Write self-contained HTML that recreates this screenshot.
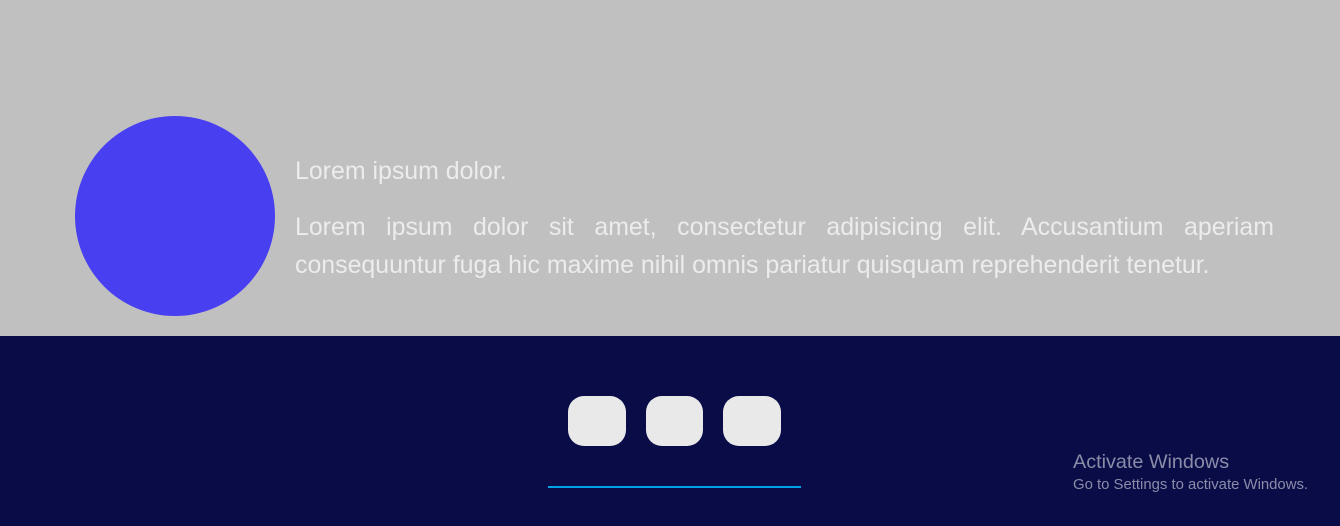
<!DOCTYPE html>
<html><head><style>
body{margin:0;width:1340px;height:526px;overflow:hidden;font-family:"Liberation Sans",Arial,sans-serif;}
.top{position:absolute;left:0;top:0;width:1340px;height:336px;background:#c0c0c0;}
.circle{position:absolute;left:75px;top:116px;width:200px;height:200px;border-radius:50%;background:#4840f0;}
.t1{position:absolute;left:295px;top:157px;font-size:24.9px;color:#ececec;line-height:28px;}
.t2{position:absolute;left:295px;top:208px;width:979px;font-size:24.9px;color:#ececec;line-height:38px;text-align:justify;}
.bot{position:absolute;left:0;top:336px;width:1340px;height:190px;background:#0a0c48;}
.b{position:absolute;top:396px;height:50px;background:#e9e9ea;border-radius:16px;}
.line{position:absolute;left:548px;top:486px;width:253px;height:2px;background:#00a2e8;}
.w1{position:absolute;left:1073px;top:451px;font-size:19.8px;color:#8a8ca8;}
.w2{position:absolute;left:1073px;top:477px;font-size:14.9px;color:#8a8ca8;}
</style></head><body>
<div class="top"></div>
<div class="circle"></div>
<div class="t1">Lorem ipsum dolor.</div>
<div class="t2">Lorem ipsum dolor sit amet, consectetur adipisicing elit. Accusantium aperiam consequuntur fuga hic maxime nihil omnis pariatur quisquam reprehenderit tenetur.</div>
<div class="bot"></div>
<div class="b" style="left:568px;width:58px"></div>
<div class="b" style="left:646px;width:57px"></div>
<div class="b" style="left:723px;width:58px"></div>
<div class="line"></div>
<div class="w1">Activate Windows</div>
<div class="w2">Go to Settings to activate Windows.</div>
</body></html>
